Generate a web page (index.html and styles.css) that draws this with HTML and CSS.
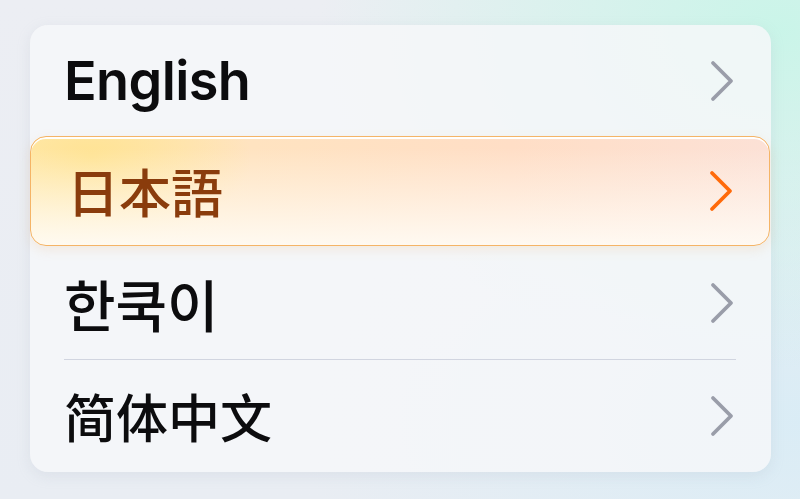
FILE: index.html
```html
<!DOCTYPE html>
<html lang="en">
<head>
<meta charset="utf-8">
<link rel="stylesheet" href="styles.css">
</head>
<body>
<div class="page">
  <div class="card">
    <div class="row">
      <span class="label latin">English</span>
      <svg class="chev" viewBox="0 0 24 42" width="24" height="42"><path d="M3 3 L21 21 L3 39"/></svg>
    </div>
    <div class="row selected">
      <span class="label jp" lang="ja">日本語</span>
      <svg class="chev" viewBox="0 0 24 42" width="24" height="42"><path d="M3 3 L21 21 L3 39"/></svg>
    </div>
    <div class="row divided">
      <span class="label kr" lang="ko">한쿡이</span>
      <svg class="chev" viewBox="0 0 24 42" width="24" height="42"><path d="M3 3 L21 21 L3 39"/></svg>
    </div>
    <div class="row">
      <span class="label sc" lang="zh-CN">简体中文</span>
      <svg class="chev" viewBox="0 0 24 42" width="24" height="42"><path d="M3 3 L21 21 L3 39"/></svg>
    </div>
  </div>
</div>
</body>
</html>
```
FILE: styles.css
```css
html, body {
  margin: 0;
  padding: 0;
  width: 800px;
  height: 499px;
  overflow: hidden;
}
body {
  background:
    radial-gradient(ellipse 460px 340px at 780px 30px, rgba(200, 245, 232, 0.95), rgba(200, 245, 232, 0) 100%),
    radial-gradient(ellipse 500px 300px at 800px 420px, rgba(214, 236, 246, 0.8), rgba(214, 236, 246, 0) 100%),
    linear-gradient(to bottom, #eceef3, #e9edf3);
}
.page {
  padding: 25px 29px 0 30px;
}
.card {
  width: 741px;
  height: 447px;
  border-radius: 18px;
  background: rgba(246, 247, 249, 0.85);
  box-shadow: 0 4px 14px rgba(160, 170, 190, 0.18);
  display: flex;
  flex-direction: column;
}
.row {
  height: 111px;
  display: flex;
  align-items: center;
  justify-content: space-between;
  padding: 0 37px 0 34px;
  box-sizing: border-box;
  position: relative;
}
.row.selected {
  height: 110px;
  border: 1px solid #f5b466;
  border-radius: 16px;
  margin: 0 1px 0 0;
  padding: 0 36px 0 33px;
  background:
    linear-gradient(to bottom, rgba(255, 255, 255, 0) 10%, rgba(255, 252, 246, 0.9) 100%),
    radial-gradient(ellipse 160px 90px at 60px 20px, rgba(255, 226, 140, 0.85), rgba(255, 226, 140, 0) 100%),
    linear-gradient(to right, #ffeab8 0%, #ffe3c0 30%, #ffdec6 65%, #fce1d6 100%);
  box-shadow: inset 0 2px 0 rgba(255, 255, 255, 0.95), 0 4px 12px rgba(240, 180, 110, 0.18);
}
.row.divided {
  height: 114px;
}
.row.divided::after {
  content: "";
  position: absolute;
  left: 34px;
  right: 35px;
  bottom: 0;
  height: 1px;
  background: #d1d5e0;
}
.label {
  color: #0c0c0e;
  font-size: 54px;
  line-height: 1;
}
.latin {
  font-family: Inter, "Liberation Sans", sans-serif;
  font-weight: 600;
  letter-spacing: -0.6px;
}
.jp {
  font-family: "Noto Sans CJK JP", sans-serif;
  font-weight: 500;
  font-size: 52px;
  color: #8a3c0c;
  margin-left: 3px;
}
.kr {
  font-family: "Noto Sans CJK KR", sans-serif;
  font-weight: 500;
  font-size: 56px;
}
.sc {
  font-family: "Noto Sans CJK SC", sans-serif;
  font-weight: 500;
  font-size: 52px;
}
.chev {
  fill: none;
  stroke: #9a9da9;
  stroke-width: 3.8;
  stroke-linecap: round;
  stroke-linejoin: round;
}
.selected .chev {
  stroke: #ff6a0a;
}
```
